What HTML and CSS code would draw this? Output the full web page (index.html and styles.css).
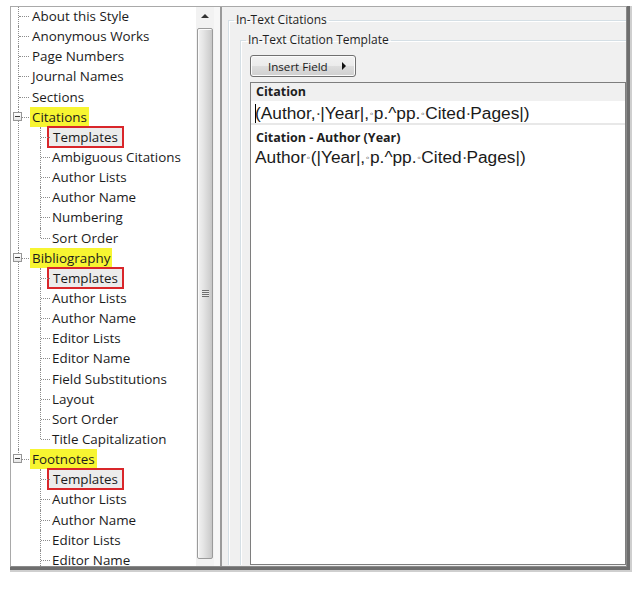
FILE: index.html
```html
<!DOCTYPE html>
<html lang="en">
<head>
  <meta charset="UTF-8" />
  <title>Output Style - Templates</title>
  <link rel="stylesheet" href="styles.css">
</head>
<body>

  <div class="shade-outer">
  <div class="shade">
  <div class="window">

    <!-- Left: style sections tree -->
    <div class="tree">
      <ul>
        <li><div class="row"><span class="label">About this Style</span></div></li>
        <li><div class="row"><span class="label">Anonymous Works</span></div></li>
        <li><div class="row"><span class="label">Page Numbers</span></div></li>
        <li><div class="row"><span class="label">Journal Names</span></div></li>
        <li><div class="row"><span class="label">Sections</span></div></li>
        <li class="open">
          <span class="toggle"></span>
          <div class="row"><span class="label hl">Citations</span></div>
          <ul>
            <li><div class="row"><span class="label boxed">Templates</span></div></li>
            <li><div class="row"><span class="label">Ambiguous Citations</span></div></li>
            <li><div class="row"><span class="label">Author Lists</span></div></li>
            <li><div class="row"><span class="label">Author Name</span></div></li>
            <li><div class="row"><span class="label">Numbering</span></div></li>
            <li><div class="row"><span class="label">Sort Order</span></div></li>
          </ul>
        </li>
        <li class="open">
          <span class="toggle"></span>
          <div class="row"><span class="label hl">Bibliography</span></div>
          <ul>
            <li><div class="row"><span class="label boxed">Templates</span></div></li>
            <li><div class="row"><span class="label">Author Lists</span></div></li>
            <li><div class="row"><span class="label">Author Name</span></div></li>
            <li><div class="row"><span class="label">Editor Lists</span></div></li>
            <li><div class="row"><span class="label">Editor Name</span></div></li>
            <li><div class="row"><span class="label">Field Substitutions</span></div></li>
            <li><div class="row"><span class="label">Layout</span></div></li>
            <li><div class="row"><span class="label">Sort Order</span></div></li>
            <li><div class="row"><span class="label">Title Capitalization</span></div></li>
          </ul>
        </li>
        <li class="open">
          <span class="toggle"></span>
          <div class="row"><span class="label hl">Footnotes</span></div>
          <ul>
            <li><div class="row"><span class="label boxed">Templates</span></div></li>
            <li><div class="row"><span class="label">Author Lists</span></div></li>
            <li><div class="row"><span class="label">Author Name</span></div></li>
            <li><div class="row"><span class="label">Editor Lists</span></div></li>
            <li class="more"><div class="row"><span class="label">Editor Name</span></div></li>
          </ul>
        </li>
      </ul>
    </div>

    <div class="vscroll">
      <div class="arrow-up"></div>
      <div class="thumb"><span class="grip"></span></div>
    </div>

    <div class="splitter"></div>

    <!-- Right: template editor -->
    <div class="panel">
      <fieldset class="group outer">
        <legend>In-Text Citations</legend>
        <fieldset class="group inner">
          <legend>In-Text Citation Template</legend>
          <button class="insert-btn">Insert Field <span class="tri"></span></button>
          <div class="editor">
            <div class="ed-head">Citation</div>
            <div class="ed-line first"><span class="caret"></span>(Author,<i class="sp">·</i>|Year|,<i class="nb">◦</i>p.^pp.<i class="nb">◦</i>Cited<i class="sp">·</i>Pages|)</div>
            <div class="ed-head plain">Citation - Author (Year)</div>
            <div class="ed-line">Author<i class="nb">◦</i>(|Year|,<i class="nb">◦</i>p.^pp.<i class="nb">◦</i>Cited<i class="sp">·</i>Pages|)</div>
          </div>
        </fieldset>
      </fieldset>
    </div>

  </div>
  </div>
  </div>

</body>
</html>
```

FILE: styles.css
```css
body {
  margin: 0;
  padding: 0;
  background: #fff;
  font-family: "Open Sans", "Noto Sans", sans-serif;
  color: #1b1b1b;
}

/* drop shadow drawn as stepped borders */
.shade-outer {
  margin: 6px 0 0 10px;
  width: fit-content;
  border-right: 2px solid #cfcfcf;
  border-bottom: 2px solid #cfcfcf;
}

.shade {
  border-right: 3px solid #6e6e6e;
  border-bottom: 3px solid #6e6e6e;
}

.window {
  display: flex;
  width: 617px;
  height: 561px;
  box-sizing: border-box;
  border: 1px solid #a9a9a9;
  border-right-color: #8a8a8a;
  border-bottom-color: #8a8a8a;
  overflow: hidden;
}

/* ---- tree ---- */

.tree {
  width: 185px;
  flex: none;
  background: #fff;
  overflow: hidden;
  font-size: 13.4px;
}

.tree ul {
  list-style: none;
  margin: 0;
  padding: 0;
}

.tree > ul {
  margin-top: -1px;
}

.tree li {
  position: relative;
  padding-left: 19px;
}

.tree li::before {
  content: "";
  position: absolute;
  left: 7px;
  top: 0;
  bottom: 0;
  border-left: 1px dotted #8c8c8c;
}

.tree li:last-child::before {
  bottom: auto;
  height: 10px;
}

/* list goes on below the visible area */
.tree li.more::before {
  height: 30px;
}

.tree li::after {
  content: "";
  position: absolute;
  left: 8px;
  top: 10px;
  width: 10px;
  border-top: 1px dotted #8c8c8c;
}

.tree li li {
  padding-left: 20px;
}

.tree li li::before {
  left: 10px;
}

.tree li li::after {
  left: 11px;
  width: 9px;
}

.row {
  height: 20.15px;
  line-height: 20px;
  white-space: nowrap;
}

.label {
  display: inline-block;
  height: 20px;
  padding: 0 2px;
  vertical-align: top;
}

.label.hl {
  background: #f7f531;
}

.label.boxed {
  height: 18px;
  line-height: 18px;
  margin: 0 0 0 -3px;
  padding: 0 4px;
  border: 2px solid #d9262a;
  background: #ececec;
  position: relative;
  top: -1px;
}

.toggle {
  position: absolute;
  left: 2px;
  top: 5px;
  width: 9px;
  height: 9px;
  box-sizing: border-box;
  border: 1px solid #969696;
  background: linear-gradient(#ffffff, #e6e6e6);
  z-index: 1;
}

.toggle::after {
  content: "";
  position: absolute;
  left: 1px;
  top: 3px;
  width: 5px;
  border-top: 1px solid #3a3a3a;
}

/* ---- scrollbar + splitter ---- */

.vscroll {
  width: 18px;
  flex: none;
  background: #f2f2f2;
  display: flex;
  flex-direction: column;
  align-items: center;
}

.arrow-up {
  height: 21px;
  width: 100%;
  position: relative;
}

.arrow-up::after {
  content: "";
  position: absolute;
  left: 5px;
  top: 7px;
  border-left: 4px solid transparent;
  border-right: 4px solid transparent;
  border-bottom: 4px solid #333;
}

.thumb {
  width: 16px;
  height: 531px;
  box-sizing: border-box;
  border: 1px solid #9b9b9b;
  border-radius: 2px;
  background: linear-gradient(to right, #f3f3f3, #e4e4e4 40%, #d2d2d2 80%, #c6c6c6);
  box-shadow: inset 1px 1px 0 #fbfbfb;
  display: flex;
  align-items: center;
  justify-content: center;
}

.grip {
  width: 7px;
  height: 7px;
  background: repeating-linear-gradient(#6e6e6e 0, #6e6e6e 1px, #e8e8e8 1px, #e8e8e8 2px);
}

.splitter {
  width: 8px;
  flex: none;
  box-sizing: border-box;
  background: #f7f7f7;
  border-right: 2px solid #9a9a9a;
}

/* ---- right panel ---- */

.panel {
  flex: 1;
  min-width: 0;
  background: #f0f0f0;
  overflow: hidden;
  font-size: 12px;
}

.group {
  margin: 0;
  padding: 0;
  min-width: 0;
  border: 1px solid #d5dfe5;
  border-right: 0;
  border-bottom: 0;
  box-shadow: inset 1px 1px 0 #ffffff;
}

.group legend {
  margin-left: 5px;
  padding: 0 2px;
  line-height: 16px;
  color: #1e1e1e;
}

.outer {
  margin: 5px 0 0 6px;
}

.inner {
  margin: 4px 0 0 11px;
}

.insert-btn {
  display: flex;
  align-items: center;
  margin: 7px 0 0 9px;
  width: 106px;
  height: 22px;
  padding: 0 0 0 17px;
  box-sizing: border-box;
  border: 1px solid #707070;
  border-radius: 3px;
  background: linear-gradient(#f2f2f2, #ebebeb 50%, #dddddd 51%, #cfcfcf);
  box-shadow: inset 0 0 0 1px #fbfbfb;
  font-family: "Open Sans", sans-serif;
  font-size: 11.6px;
  color: #1b1b1b;
}

.tri {
  margin-left: auto;
  margin-right: 9px;
  border-top: 4px solid transparent;
  border-bottom: 4px solid transparent;
  border-left: 4px solid #111;
}

.editor {
  margin: 5px 0 0 9px;
  height: 483px;
  box-sizing: border-box;
  border: 1px solid #7e7e7e;
  background: #fff;
}

.ed-head {
  height: 18px;
  line-height: 18px;
  padding-left: 5px;
  font-size: 12.5px;
  font-weight: bold;
  background: #f0f0f0;
  color: #1e1e1e;
}

.ed-head.plain {
  background: #fff;
  height: 21px;
  line-height: 25px;
}

.ed-line {
  height: 22px;
  line-height: 22px;
  padding-left: 4px;
  font-family: "Liberation Sans", Arial, sans-serif;
  font-size: 17.3px;
  color: #1a1a1a;
  white-space: nowrap;
}

.ed-line.first {
  line-height: 24px;
  border-bottom: 2px solid #e8e8e8;
}

.ed-line i {
  display: inline-block;
  width: 0.278em;
  text-align: center;
  font-style: normal;
  color: #444;
}

.ed-line .nb {
  font-size: 10px;
  width: 4.8px;
  vertical-align: 2px;
  color: #333;
}

.caret {
  display: inline-block;
  width: 1px;
  height: 19px;
  margin-right: -1px;
  background: #000;
  vertical-align: -4px;
}
```
